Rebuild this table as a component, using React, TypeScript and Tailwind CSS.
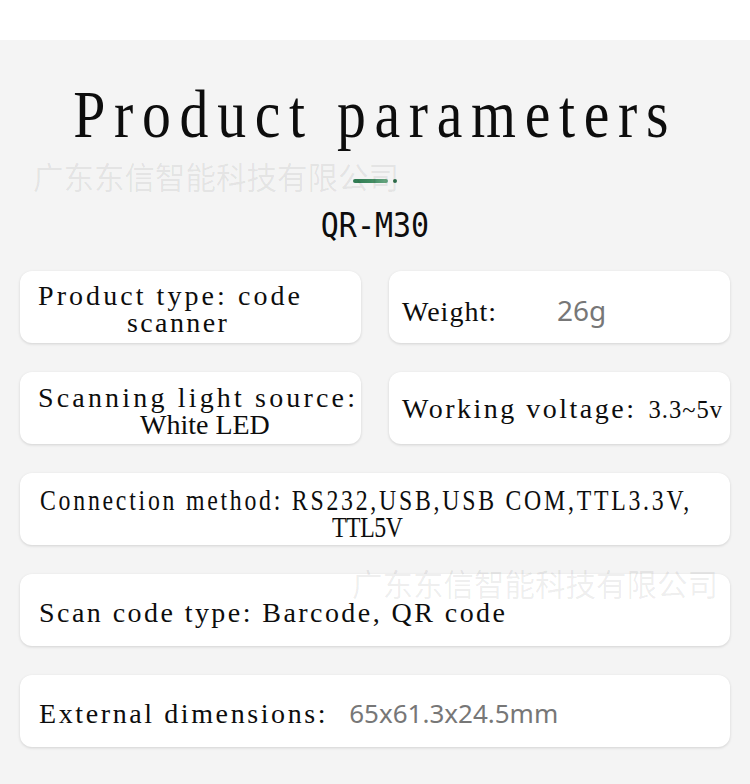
import React from 'react';

const serif = "font-['Liberation_Serif',serif] whitespace-pre";

const Card: React.FC<{ className?: string; children: React.ReactNode }> = ({ className = '', children }) => (
    <div
        className={`h-[72px] bg-white rounded-[12px] shadow-[0_1px_3px_rgba(0,0,0,0.14)] flex items-center ${className}`}
    >
        {children}
    </div>
);

export default function App() {
    return (
        <div className="relative w-[750px] h-[784px] overflow-hidden bg-white text-[#0d0d0d]">
            <div className="h-10 bg-white" />
            <div className="h-[744px] bg-[#f4f4f4] flex flex-col items-center">
                <h1
                    className={`mt-[40px] h-[68px] leading-[68px] text-[68px] font-normal tracking-[10.2px] scale-x-[0.85] ${serif}`}
                >
                    Product parameters
                </h1>

                <div className="mt-[31px] h-[4px] flex items-center gap-[5px]">
                    <div className="w-[35px] h-[4px] rounded-full bg-gradient-to-r from-[#2f7a52] via-[#3f8a60] to-[#6aa985]" />
                    <div className="w-[4px] h-[4px] rounded-full bg-[#2f6e4b]" />
                </div>

                <div className="mt-[27px] h-[30px] leading-[30px] text-[30px] font-['DejaVu_Sans_Mono',monospace] scale-y-[1.15]">
                    QR-M30
                </div>

                <div className={`mt-[31px] w-full px-5 grid grid-cols-2 gap-x-[28px] gap-y-[29px] text-[28px] leading-[27px] ${serif}`}>
                    <Card>
                        <div className="mt-[4px] pl-[18px]">
                            <div className="tracking-[3.06px]">Product type: code</div>
                            <div className="ml-[89px] tracking-[2.4px]">scanner</div>
                        </div>
                    </Card>
                    <Card>
                        <div className="mt-[7px] pl-[13px] flex items-baseline">
                            <span className="tracking-[1px]">Weight:</span>
                            <span className="ml-[60px] font-['Noto_Sans',sans-serif] text-[28px] text-[#777]">26g</span>
                        </div>
                    </Card>
                    <Card>
                        <div className="mt-[6px] pl-[18px]">
                            <div className="tracking-[3.17px]">Scanning light source:</div>
                            <div className="ml-[102px]">White LED</div>
                        </div>
                    </Card>
                    <Card>
                        <div className="mt-[1px] pl-[13px] flex items-baseline">
                            <span className="tracking-[2.5px]">Working voltage:</span>
                            <span className="ml-[12px] text-[24.6px] tracking-[1px]">3.3~5v</span>
                        </div>
                    </Card>
                    <Card className="col-span-2">
                        <div className="mt-[9px] pl-[20px] text-[29px]">
                            <div className="w-max origin-left scale-x-[0.82] tracking-[3.36px]">
                                Connection method: RS232,USB,USB COM,TTL3.3V,
                            </div>
                            <div className="w-max ml-[292px] origin-left scale-x-[0.82] tracking-[-0.5px]">TTL5V</div>
                        </div>
                    </Card>
                    <Card className="col-span-2">
                        <div className="mt-[5px] pl-[19px] tracking-[2.44px]">Scan code type: Barcode, QR code</div>
                    </Card>
                    <Card className="col-span-2">
                        <div className="mt-[5px] pl-[19px] flex items-baseline">
                            <span className="tracking-[2.6px]">External dimensions:</span>
                            <span className="ml-[21px] font-['Noto_Sans',sans-serif] text-[26px] text-[#777]">
                                65x61.3x24.5mm
                            </span>
                        </div>
                    </Card>
                </div>
            </div>

            <div className="pointer-events-none absolute left-[33px] top-[161px] text-[30.5px] leading-none font-['Noto_Sans_CJK_SC',sans-serif] text-black/[0.07] whitespace-nowrap">
                广东东信智能科技有限公司
            </div>
            <div className="pointer-events-none absolute left-[352px] top-[568px] text-[30.5px] leading-none font-['Noto_Sans_CJK_SC',sans-serif] text-black/[0.07] whitespace-nowrap">
                广东东信智能科技有限公司
            </div>
        </div>
    );
}
